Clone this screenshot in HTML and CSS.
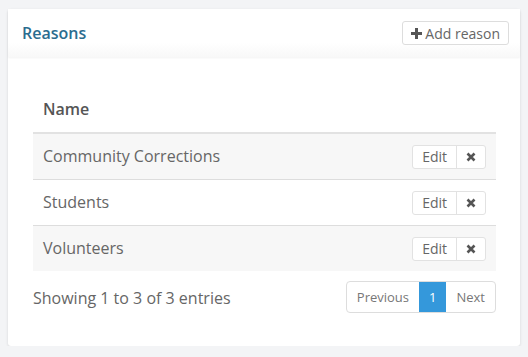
FILE: index.html
```html
<!DOCTYPE html>
<html lang="en">
<head>
    <meta charset="UTF-8">
    <meta name="viewport" content="width=device-width, initial-scale=1.0">
    <title>Reasons</title>
    <link rel="stylesheet" href="styles.css">
</head>
<body>
    <div class="painel">
        <div class="painel-topo">
            <h2 class="painel-titulo">Reasons</h2>
            <button class="botao">
                <svg class="icone-mais" width="11" height="11" viewBox="0 0 11 11"><path d="M4 0h3v4h4v3H7v4H4V7H0V4h4z" fill="#555"/></svg>Add reason
            </button>
        </div>
        <div class="painel-corpo">
            <table class="tabela">
                <thead>
                    <tr><th>Name</th><th></th></tr>
                </thead>
                <tbody>
                    <tr>
                        <td>Community Corrections</td>
                        <td class="acoes">
                            <div class="grupo"><button class="botao-peq">Edit</button><button class="botao-peq botao-x"><svg width="10" height="10" viewBox="0 0 10 10"><path d="M1.5 1.5l7 7M8.5 1.5l-7 7" stroke="#555" stroke-width="2.6"/></svg></button></div>
                        </td>
                    </tr>
                    <tr>
                        <td>Students</td>
                        <td class="acoes">
                            <div class="grupo"><button class="botao-peq">Edit</button><button class="botao-peq botao-x"><svg width="10" height="10" viewBox="0 0 10 10"><path d="M1.5 1.5l7 7M8.5 1.5l-7 7" stroke="#555" stroke-width="2.6"/></svg></button></div>
                        </td>
                    </tr>
                    <tr>
                        <td>Volunteers</td>
                        <td class="acoes">
                            <div class="grupo"><button class="botao-peq">Edit</button><button class="botao-peq botao-x"><svg width="10" height="10" viewBox="0 0 10 10"><path d="M1.5 1.5l7 7M8.5 1.5l-7 7" stroke="#555" stroke-width="2.6"/></svg></button></div>
                        </td>
                    </tr>
                </tbody>
            </table>
            <div class="rodape">
                <span class="info">Showing 1 to 3 of 3 entries</span>
                <div class="paginacao">
                    <span class="pagina">Previous</span>
                    <span class="pagina ativa">1</span>
                    <span class="pagina">Next</span>
                </div>
            </div>
        </div>
    </div>
</body>
</html>
```

FILE: styles.css
```css
body {
    font-family: "Open Sans", sans-serif;
    background-color: #f3f4f6;
    color: #666;
    margin: 0;
    padding: 9px 8px 0 8px;
}

.painel {
    background-color: #fff;
    border-radius: 3px;
    box-shadow: 0 1px 3px rgba(0, 0, 0, 0.12);
    height: 337px;
}

.painel-topo {
    display: flex;
    justify-content: space-between;
    align-items: center;
    height: 48px;
    padding: 0 11px 0 14px;
    background: linear-gradient(#fff 70%, #f8f8f8);
    box-shadow: 0 1px 2px rgba(0, 0, 0, 0.05);
}

.painel-titulo {
    margin: 0;
    font-size: 16px;
    font-weight: 600;
    color: #2b6c8f;
}

.botao {
    display: flex;
    align-items: center;
    gap: 3px;
    height: 24px;
    padding: 0 8px;
    font-family: "Open Sans", sans-serif;
    font-size: 14px;
    color: #666;
    background-color: #fff;
    border: 1px solid #ddd;
    border-radius: 3px;
}

.icone-mais {
    margin-top: 1px;
}

.painel-corpo {
    padding: 31px 24px 0 25px;
}

.tabela {
    width: 100%;
    border-collapse: collapse;
    font-size: 16px;
}

.tabela th {
    text-align: left;
    font-weight: 600;
    color: #555;
    padding: 10px 10px 12px 10px;
    height: 21px;
    border-bottom: 2px solid #e2e2e2;
}

.tabela td {
    height: 43px;
    padding: 0 10px 2px 10px;
    border-top: 1px solid #ddd;
    color: #666;
}

.tabela td.acoes {
    padding: 0 10px;
    height: 45px;
}

.tabela tbody tr:first-child td {
    border-top: none;
}

.tabela tbody tr:nth-child(odd) {
    background-color: #f7f7f7;
}

.acoes {
    text-align: right;
}

.grupo {
    display: inline-flex;
    border: 1px solid #e2e2e2;
    border-radius: 3px;
    background-color: #fff;
    vertical-align: middle;
}

.botao-peq {
    height: 22px;
    padding: 0 9px;
    font-family: "Open Sans", sans-serif;
    font-size: 14px;
    color: #666;
    background: none;
    border: none;
}

.botao-x {
    border-left: 1px solid #e2e2e2;
    width: 29px;
    display: flex;
    align-items: center;
    justify-content: center;
    padding: 0;
}

.rodape {
    display: flex;
    justify-content: space-between;
    align-items: center;
    margin-top: 10px;
}

.info {
    font-size: 16px;
    color: #666;
    margin-top: 2px;
}

.paginacao {
    display: flex;
    border: 1px solid #ddd;
    border-radius: 4px;
    overflow: hidden;
    height: 30px;
}

.pagina {
    display: flex;
    align-items: center;
    padding: 0 10px;
    font-size: 13px;
    color: #777;
}

.pagina.ativa {
    background-color: #3498db;
    color: #fff;
    padding: 0 10px;
}
```
